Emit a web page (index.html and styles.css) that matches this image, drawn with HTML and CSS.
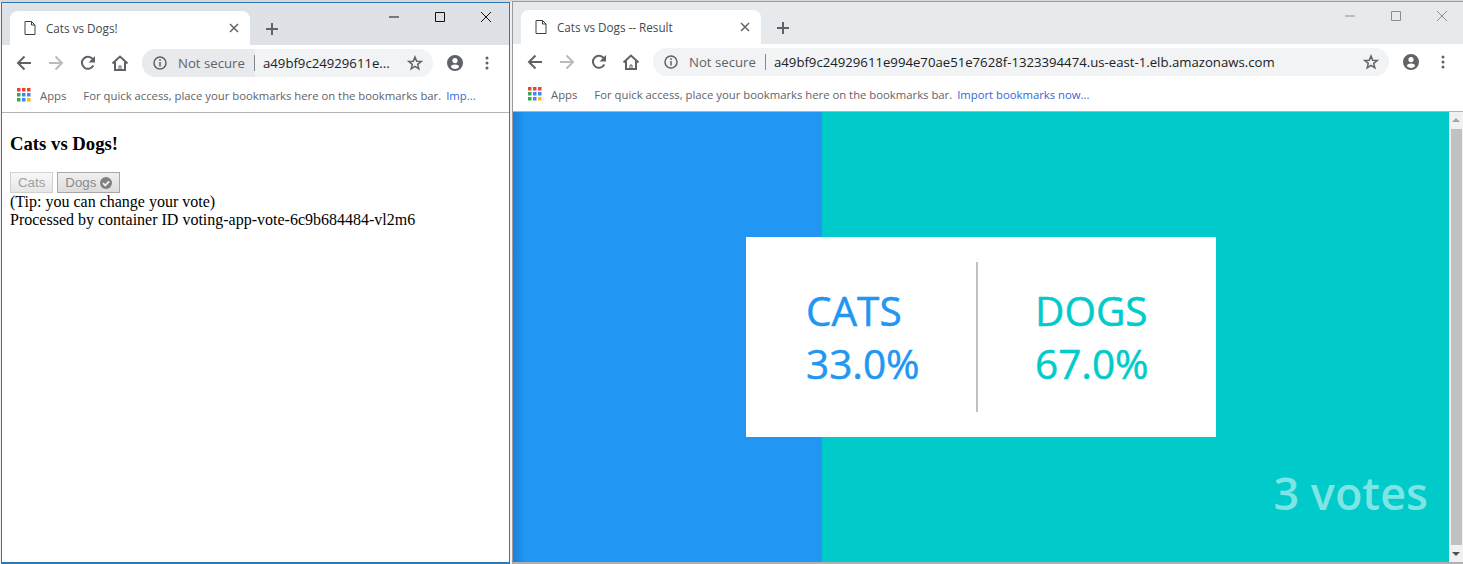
FILE: index.html
```html
<!DOCTYPE html>
<html lang="en">

<head>
    <meta charset="UTF-8">
    <title>Cats vs Dogs</title>
    <link rel="stylesheet" href="styles.css">
</head>

<body>
    <svg class="defs" width="0" height="0">
        <symbol id="i-doc" viewBox="0 0 12 14"><path d="M1 .5h6.500L11 4v9.500H1zM7.500 .5V4H11" fill="none" stroke="currentColor"/></symbol>
        <symbol id="i-x" viewBox="0 0 10 10"><path d="M1 1l8 8M9 1l-8 8" fill="none" stroke="currentColor" stroke-width="1.500"/></symbol>
        <symbol id="i-plus" viewBox="0 0 12 12"><path d="M6 0v12M0 6h12" fill="none" stroke="currentColor" stroke-width="2"/></symbol>
        <symbol id="i-back" viewBox="0 0 16 16"><path d="M15 8H2.500M8.500 1.500L2 8l6.500 6.500" fill="none" stroke="currentColor" stroke-width="2"/></symbol>
        <symbol id="i-forward" viewBox="0 0 16 16"><path d="M1 8h12.500M7.500 1.500L14 8l-6.500 6.500" fill="none" stroke="currentColor" stroke-width="2"/></symbol>
        <symbol id="i-reload" viewBox="0 0 16 16"><path d="M13.300 10.500A6 6 0 1 1 12.600 4L14 5.500" fill="none" stroke="currentColor" stroke-width="2"/><path d="M15 1v6.500H8.500z" fill="currentColor"/></symbol>
        <symbol id="i-home" viewBox="0 0 18 16"><path d="M1.500 8.500L9 1.500l7.500 7M4 7v8h10V7" fill="none" stroke="currentColor" stroke-width="2"/><path d="M8 15v-4h2v4" fill="none" stroke="currentColor"/></symbol>
        <symbol id="i-info" viewBox="0 0 14 14"><circle cx="7" cy="7" r="6" fill="none" stroke="currentColor" stroke-width="1.500"/><path d="M7 6v4.500M7 3.300v1.600" fill="none" stroke="currentColor" stroke-width="1.500"/></symbol>
        <symbol id="i-star" viewBox="0 0 16 16"><path d="M8 2l1.700 4.200 4.500.3-3.500 2.900 1.100 4.400L8 11.400l-3.800 2.400 1.100-4.400-3.500-2.900 4.500-.3z" fill="none" stroke="currentColor" stroke-width="1.500"/></symbol>
        <symbol id="i-avatar" viewBox="0 0 16 16"><path fill-rule="evenodd" d="M8 0a8 8 0 1 1 0 16A8 8 0 0 1 8 0zm0 3a2.600 2.600 0 1 0 0 5.200A2.600 2.600 0 0 0 8 3zm0 6.600c-1.900 0-4 .9-4 2v.6a5.500 5.500 0 0 0 8 0v-.6c0-1.100-2.100-2-4-2z" fill="currentColor"/></symbol>
        <symbol id="i-dots" viewBox="0 0 4 14"><circle cx="2" cy="2" r="1.500" fill="currentColor"/><circle cx="2" cy="7" r="1.500" fill="currentColor"/><circle cx="2" cy="12" r="1.500" fill="currentColor"/></symbol>
        <symbol id="i-min" viewBox="0 0 10 10"><path d="M0 5h10" stroke="currentColor" fill="none"/></symbol>
        <symbol id="i-max" viewBox="0 0 10 10"><path d="M.5 .5h9v9h-9z" stroke="currentColor" fill="none"/></symbol>
        <symbol id="i-close" viewBox="0 0 10 10"><path d="M0 0l10 10M10 0L0 10" stroke="currentColor" fill="none"/></symbol>
        <symbol id="i-check" viewBox="0 0 12 12"><circle cx="6" cy="6" r="6" fill="currentColor"/><path d="M3 6.200l2.200 2.200L9.200 4.300" fill="none" stroke="#f0f0f0" stroke-width="1.800"/></symbol>
        <symbol id="i-apps" viewBox="0 0 14 14">
            <path fill="#ea4335" d="M0 0h3.500v3.500H0zM5 0h3.500v3.500H5zM10 0h3.500v3.500H10z"/>
            <path fill="#34a853" d="M0 5h3.500v3.500H0zM0 10h3.500v3.500H0z"/>
            <path fill="#4285f4" d="M5 5h3.500v3.500H5zM10 5h3.500v3.500H10zM5 10h3.500v3.500H5z"/>
            <path fill="#fbbc05" d="M10 10h3.500v3.500H10z"/>
        </symbol>
    </svg>

    <div class="desktop-edge"></div>

    <!-- ventana de votar -->
    <div class="window vote-window">
        <div class="tabstrip">
            <div class="tab">
                <svg class="tab-doc"><use href="#i-doc"/></svg>
                <span class="tab-title">Cats vs Dogs!</span>
                <svg class="tab-close"><use href="#i-x"/></svg>
            </div>
            <svg class="new-tab"><use href="#i-plus"/></svg>
            <div class="win-controls">
                <svg><use href="#i-min"/></svg>
                <svg><use href="#i-max"/></svg>
                <svg><use href="#i-close"/></svg>
            </div>
        </div>
        <div class="toolbar">
            <svg class="nav"><use href="#i-back"/></svg>
            <svg class="nav off"><use href="#i-forward"/></svg>
            <svg class="nav"><use href="#i-reload"/></svg>
            <svg class="nav home"><use href="#i-home"/></svg>
            <div class="omnibox">
                <div class="chip">
                    <svg class="info"><use href="#i-info"/></svg>
                    <span>Not secure</span>
                </div>
                <span class="url">a49bf9c24929611e...</span>
                <svg class="star"><use href="#i-star"/></svg>
            </div>
            <svg class="avatar"><use href="#i-avatar"/></svg>
            <svg class="dots"><use href="#i-dots"/></svg>
        </div>
        <div class="bookmarks">
            <svg class="apps"><use href="#i-apps"/></svg>
            <span class="apps-label">Apps</span>
            <span class="bm-hint">For quick access, place your bookmarks here on the bookmarks bar.</span>
            <a class="bm-link">Imp...</a>
        </div>
        <div class="page vote-page">
            <h3>Cats vs Dogs!</h3>
            <div class="vote-buttons">
                <button class="vote-btn">Cats</button>
                <button class="vote-btn picked">Dogs <svg class="check"><use href="#i-check"/></svg></button>
            </div>
            <div>(Tip: you can change your vote)</div>
            <div>Processed by container ID voting-app-vote-6c9b684484-vl2m6</div>
        </div>
    </div>

    <!-- ventana de resultados -->
    <div class="window result-window">
        <div class="tabstrip">
            <div class="tab">
                <svg class="tab-doc"><use href="#i-doc"/></svg>
                <span class="tab-title">Cats vs Dogs -- Result</span>
                <svg class="tab-close"><use href="#i-x"/></svg>
            </div>
            <svg class="new-tab"><use href="#i-plus"/></svg>
            <div class="win-controls">
                <svg><use href="#i-min"/></svg>
                <svg><use href="#i-max"/></svg>
                <svg><use href="#i-close"/></svg>
            </div>
        </div>
        <div class="toolbar">
            <svg class="nav"><use href="#i-back"/></svg>
            <svg class="nav off"><use href="#i-forward"/></svg>
            <svg class="nav"><use href="#i-reload"/></svg>
            <svg class="nav home"><use href="#i-home"/></svg>
            <div class="omnibox">
                <div class="chip">
                    <svg class="info"><use href="#i-info"/></svg>
                    <span>Not secure</span>
                </div>
                <span class="url">a49bf9c24929611e994e70ae51e7628f-1323394474.us-east-1.elb.amazonaws.com</span>
                <svg class="star"><use href="#i-star"/></svg>
            </div>
            <svg class="avatar"><use href="#i-avatar"/></svg>
            <svg class="dots"><use href="#i-dots"/></svg>
        </div>
        <div class="bookmarks">
            <svg class="apps"><use href="#i-apps"/></svg>
            <span class="apps-label">Apps</span>
            <span class="bm-hint">For quick access, place your bookmarks here on the bookmarks bar.</span>
            <a class="bm-link">Import bookmarks now...</a>
        </div>
        <div class="page result-page">
            <div class="bg-cats"></div>
            <div class="bg-dogs"></div>
            <div class="scrollbar">
                <span class="arrow up"></span>
                <span class="thumb"></span>
                <span class="arrow down"></span>
            </div>
            <div class="panel">
                <div class="choice cats">
                    <div>CATS</div>
                    <div>33.0%</div>
                </div>
                <div class="divider"></div>
                <div class="choice dogs">
                    <div>DOGS</div>
                    <div>67.0%</div>
                </div>
            </div>
            <div class="votes">3 votes</div>
        </div>
    </div>
</body>

</html>
```

FILE: styles.css
```css
* {
    box-sizing: border-box;
}

html, body {
    margin: 0;
    height: 564px;
    overflow: hidden;
}

body {
    position: relative;
    background-color: #f0f0f0;
    font-family: "Open Sans", "Noto Sans", sans-serif;
}

.defs {
    position: absolute;
}

svg {
    display: block;
    flex: none;
}

.desktop-edge {
    position: absolute;
    left: 0;
    top: 0;
    width: 100%;
    height: 2px;
    background-color: #d8d8d8;
}

/* ventanas */
.window {
    position: absolute;
    display: flex;
    flex-direction: column;
    background: white;
}

.vote-window {
    left: 1px;
    top: 2px;
    width: 509px;
    height: 562px;
    border: 1px solid #2b79b5;
    border-width: 1px 1px 2px 1px;
}

.result-window {
    left: 512px;
    top: 1px;
    width: 951px;
    height: 563px;
    border-top: 1px solid #9b9b9b;
    border-left: 1px solid #9b9b9b;
    border-bottom: 2px solid #b0b0b0;
}

/* pestanas */
.tabstrip {
    display: flex;
    align-items: flex-end;
    height: 42px;
    background-color: #dee1e6;
    flex: none;
}

.result-window .tabstrip {
    background-color: #e7eaed;
}

.tab {
    display: flex;
    align-items: center;
    width: 240px;
    height: 34px;
    margin-left: 8px;
    background: white;
    border-radius: 8px 8px 0 0;
    font-size: 11.700px;
    color: #45494e;
}

.tab-doc {
    width: 12px;
    height: 14px;
    margin-left: 14px;
    color: #3c4043;
}

.tab-title {
    margin-left: 10px;
    flex: 1;
}

.tab-close {
    width: 10px;
    height: 10px;
    margin-right: 11px;
    color: #5f6368;
}

.new-tab {
    width: 12px;
    height: 12px;
    margin: 0 0 10px 16px;
    color: #5f6368;
}

.win-controls {
    display: flex;
    gap: 36px;
    align-self: flex-start;
    margin: 9px 0 0 auto;
    padding-right: 18px;
    color: #111;
}

.win-controls svg {
    width: 10px;
    height: 10px;
}

.result-window .win-controls {
    margin-top: 9px;
    padding-right: 16px;
    color: #8c8e90;
}

/* barra de navegacion */
.toolbar {
    display: flex;
    align-items: center;
    height: 36px;
    flex: none;
    padding-left: 14px;
    color: #5f6368;
}

.nav {
    width: 16px;
    height: 16px;
    margin-right: 16px;
}

.nav.off {
    color: #b9bbbe;
}

.nav.home {
    width: 18px;
    margin-left: -1px;
    margin-right: 13px;
}

.omnibox {
    display: flex;
    align-items: center;
    width: 291px;
    height: 28px;
    background-color: #f1f3f4;
    border-radius: 14px;
    font-size: 13.180px;
}

.result-window .omnibox {
    width: 736px;
}

.chip {
    display: flex;
    align-items: center;
    height: 28px;
    width: 113px;
    padding-left: 11px;
    border-radius: 14px 0 0 14px;
    background-color: #e8eaed;
    position: relative;
    color: #5f6368;
}

.result-window .chip {
    background: none;
}

.chip::after {
    content: "";
    position: absolute;
    right: 0;
    top: 6px;
    height: 16px;
    width: 1px;
    background-color: #80868b;
}

.info {
    width: 14px;
    height: 14px;
    margin-right: 11px;
    color: #5f6368;
}

.url {
    margin-left: 8px;
    flex: 1;
    color: #202124;
    white-space: nowrap;
}

.star {
    width: 16px;
    height: 16px;
    margin-right: 10px;
}

.avatar {
    width: 16px;
    height: 16px;
    margin-left: 14px;
}

.dots {
    width: 4px;
    height: 14px;
    margin-left: 22px;
}

/* marcadores */
.bookmarks {
    display: flex;
    align-items: center;
    height: 32px;
    flex: none;
    padding: 0 0 3px 15px;
    border-bottom: 1px solid #b4b4b4;
    font-size: 11.300px;
    color: #5f6368;
}

.apps {
    width: 14px;
    height: 14px;
}

.apps-label {
    margin-left: 9px;
}

.bm-hint {
    margin-left: 17px;
}

.bm-link {
    margin-left: 5px;
    color: #3367d6;
}

/* pagina de votar */
.page {
    flex: 1;
    position: relative;
}

.vote-page {
    padding: 20px 8px 0;
    font-family: "Liberation Serif", serif;
    font-size: 16px;
    line-height: 18px;
    color: black;
    white-space: nowrap;
}

.vote-page h3 {
    margin: 0 0 18px;
    font-size: 18.720px;
    line-height: 21px;
}

.vote-buttons {
    display: flex;
    gap: 4px;
    height: 21px;
}

.vote-btn {
    display: flex;
    align-items: center;
    gap: 4px;
    height: 21px;
    padding: 0 7px;
    border: 1px solid #d0d0d0;
    background: linear-gradient(#f8f8f8, #e6e6e6);
    font-family: "Liberation Sans", sans-serif;
    font-size: 13.300px;
    color: #a0a0a0;
}

.vote-btn.picked {
    border-color: #a8a8a8;
    background: linear-gradient(#f0f0f0, #dcdcdc);
    color: #8a8a8a;
}

.check {
    width: 12px;
    height: 12px;
    color: #808080;
}

/* pagina de resultados */
.result-page {
    display: flex;
}

.bg-cats {
    width: 309px;
    background: linear-gradient(90deg, #1a80d6, #2196f3 12px);
}

.bg-dogs {
    flex: 1;
    background-color: #00cbca;
}

.scrollbar {
    display: flex;
    flex-direction: column;
    width: 14px;
    background-color: #f1f1f1;
}

.thumb {
    flex: 1;
    margin: 0 1px 0 2px;
    background-color: #c1c1c1;
}

.arrow {
    height: 17px;
    flex: none;
    position: relative;
}

.arrow::after {
    content: "";
    position: absolute;
    left: 3px;
    border-left: 4px solid transparent;
    border-right: 4px solid transparent;
}

.arrow.up::after {
    top: 6px;
    border-bottom: 4px solid #a3a3a3;
}

.arrow.down::after {
    top: 7px;
    border-top: 4px solid #505050;
}

.panel {
    position: absolute;
    left: 233px;
    top: 125px;
    display: flex;
    align-items: center;
    width: 470px;
    height: 200px;
    background: white;
}

.divider {
    width: 2px;
    height: 150px;
    background-color: #bcc1c4;
}

.choice {
    padding-left: 60px;
    font-size: 40.500px;
    -webkit-text-stroke: 0.5px currentColor;
    line-height: 53px;
}

.choice.cats {
    width: 230px;
    color: #2196f3;
}

.choice.dogs {
    width: 238px;
    padding-left: 57px;
    color: #00cbca;
}

.votes {
    position: absolute;
    right: 35px;
    bottom: 39px;
    font-size: 45px;
    font-weight: 600;
    line-height: 60px;
    color: rgba(255, 255, 255, 0.5);
}
```
